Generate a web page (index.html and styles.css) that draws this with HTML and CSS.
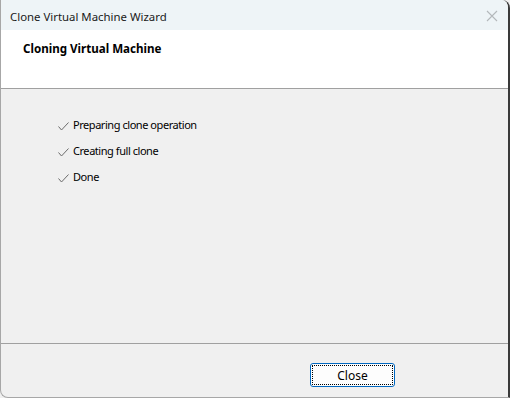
FILE: index.html
```html
<!DOCTYPE html>
<html>
<head>
    <title>Clone Virtual Machine Wizard</title>
    <link rel="stylesheet" href="styles.css">
</head>
<body>
    <div class="window">
        <div class="titlebar">
            <span class="title">Clone Virtual Machine Wizard</span>
            <svg class="close-icon" width="12" height="12" viewBox="0 0 12 12">
                <path d="M1 1 L11 11 M11 1 L1 11" stroke="#b4b8bb" stroke-width="1.1" fill="none"/>
            </svg>
        </div>
        <div class="header">
            <p class="header-text">Cloning Virtual Machine</p>
        </div>
        <div class="content">
            <div class="step">
                <svg class="check" width="11" height="9" viewBox="0 0 11 9"><path d="M0.5 4.5 L3.5 8 L10.5 0.5" stroke="#6b6b6b" stroke-width="1" fill="none"/></svg>
                Preparing clone operation
            </div>
            <div class="step">
                <svg class="check" width="11" height="9" viewBox="0 0 11 9"><path d="M0.5 4.5 L3.5 8 L10.5 0.5" stroke="#6b6b6b" stroke-width="1" fill="none"/></svg>
                Creating full clone
            </div>
            <div class="step">
                <svg class="check" width="11" height="9" viewBox="0 0 11 9"><path d="M0.5 4.5 L3.5 8 L10.5 0.5" stroke="#6b6b6b" stroke-width="1" fill="none"/></svg>
                Done
            </div>
        </div>
        <div class="footer">
            <button id="closeButton">Close</button>
        </div>
    </div>
</body>
</html>
```

FILE: styles.css
```css
body, html {
    margin: 0;
    height: 100%;
    background-color: #f0f0f0;
    font-family: "Noto Sans", "Open Sans", sans-serif;
    font-size: 12px;
    color: #000;
}

.window {
    box-sizing: border-box;
    width: 510px;
    height: 398px;
    display: flex;
    flex-direction: column;
    background-color: #f0f0f0;
    border-left: 1px solid #a7a7a7;
    border-right: 2px solid #3a3a3a;
    border-bottom: 1px solid #a7a7a7;
    border-radius: 0 8px 0 8px;
    overflow: hidden;
}

.titlebar {
    height: 30px;
    display: flex;
    align-items: center;
    justify-content: space-between;
    padding: 2px 9px 0 9px;
    box-sizing: border-box;
    background-color: #eef4f7;
}

.title {
    font-size: 11.4px;
    color: #1a1a1a;
}

.close-icon {
    margin-right: 1px;
}

.header {
    height: 58px;
    background-color: #fff;
    border-bottom: 1px solid #a0a0a0;
}

.header-text {
    margin: 10px 0 0 22px;
    font-weight: bold;
    font-size: 11.6px;
    line-height: 18px;
}

.content {
    flex: 1;
    display: flex;
    flex-direction: column;
    padding: 28px 0 0 57px;
    border-bottom: 1px solid #a0a0a0;
}

.step {
    display: flex;
    align-items: center;
    align-self: flex-start;
    height: 16px;
    line-height: 16px;
    margin-bottom: 10px;
    font-size: 11px;
    letter-spacing: -0.45px;
}

.check {
    margin: 3px 4px 0 0;
}

.footer {
    height: 53px;
    display: flex;
    justify-content: flex-end;
    align-items: flex-start;
    padding-right: 113px;
}

#closeButton {
    margin-top: 19px;
    width: 85px;
    height: 24px;
    font-family: "Noto Sans", sans-serif;
    font-size: 12px;
    background-color: #fdfdfd;
    border: 1px solid #0067c0;
    border-radius: 3px;
    outline: 1px dotted #000;
    outline-offset: -3px;
    padding: 0;
}
```
